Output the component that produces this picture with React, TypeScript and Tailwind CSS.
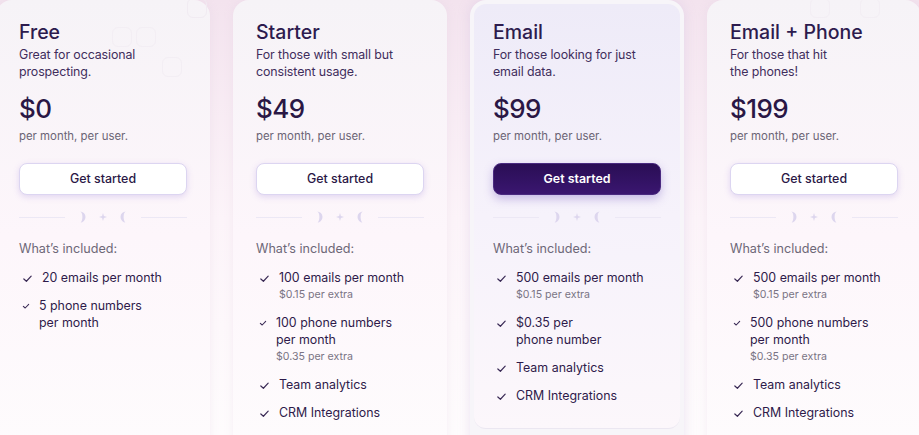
type Feature = { text: string[]; sub?: string; tight?: boolean };

type Plan = {
  name: string;
  desc: string[];
  price: string;
  features: Feature[];
  featured?: boolean;
};

const plans: Plan[] = [
  {
    name: "Free",
    desc: ["Great for occasional", "prospecting."],
    price: "$0",
    features: [
      { text: ["20 emails per month"] },
      { text: ["5 phone numbers", "per month"], tight: true },
    ],
  },
  {
    name: "Starter",
    desc: ["For those with small but", "consistent usage."],
    price: "$49",
    features: [
      { text: ["100 emails per month"], sub: "$0.15 per extra" },
      { text: ["100 phone numbers", "per month"], sub: "$0.35 per extra", tight: true },
      { text: ["Team analytics"] },
      { text: ["CRM Integrations"] },
    ],
  },
  {
    name: "Email",
    desc: ["For those looking for just", "email data."],
    price: "$99",
    featured: true,
    features: [
      { text: ["500 emails per month"], sub: "$0.15 per extra" },
      { text: ["$0.35 per", "phone number"] },
      { text: ["Team analytics"] },
      { text: ["CRM Integrations"] },
    ],
  },
  {
    name: "Email + Phone",
    desc: ["For those that hit", "the phones!"],
    price: "$199",
    features: [
      { text: ["500 emails per month"], sub: "$0.15 per extra" },
      { text: ["500 phone numbers", "per month"], sub: "$0.35 per extra", tight: true },
      { text: ["Team analytics"] },
      { text: ["CRM Integrations"] },
    ],
  },
];

function Check({ small }: { small?: boolean }) {
  return (
    <svg
      viewBox="0 0 12 12"
      className={small ? "w-[8px] h-[8px] mt-[5px] shrink-0" : "w-[11px] h-[11px] mt-[4px] shrink-0"}
      fill="none"
      stroke="#3a2a55"
      strokeWidth={small ? 1.6 : 1.3}
      strokeLinecap="round"
      strokeLinejoin="round"
    >
      <path d="M2 6.5 L4.8 9 L10 3.5" />
    </svg>
  );
}

function Divider() {
  return (
    <div className="flex items-center gap-1 mt-4 h-3">
      <div className="flex-1 h-px bg-[#ece8f5]" />
      <svg viewBox="0 0 68 14" className="w-[68px] h-[14px]" fill="#ddd6ee">
        <path d="M11 1.5 A5.5 5.5 0 0 1 11 12.5 A2.4 5.5 0 0 0 11 1.5 Z" />
        <path d="M34 3 L34.9 6.1 L38 7 L34.9 7.9 L34 11 L33.1 7.9 L30 7 L33.1 6.1 Z" />
        <path d="M57 1.5 A5.5 5.5 0 0 0 57 12.5 A2.4 5.5 0 0 1 57 1.5 Z" />
      </svg>
      <div className="flex-1 h-px bg-[#ece8f5]" />
    </div>
  );
}

function CardBody({ plan }: { plan: Plan }) {
  return (
    <>
      <h2 className="text-[19.5px] leading-[28px] font-medium text-[#2d1b4e]">{plan.name}</h2>
      <p className="text-[12.4px] leading-[17px] text-[#3f2d5c] tracking-[-0.1px]">
        {plan.desc[0]}
        <br />
        {plan.desc[1]}
      </p>
      <div className="mt-[11px] text-[26px] leading-[36px] font-medium tracking-[-0.6px] text-[#2a1745]">
        {plan.price}
      </div>
      <div className="mt-[1px] text-[11.4px] leading-[16px] text-[#6b6475]">per month, per user.</div>
      {plan.featured ? (
        <button className="mt-[19px] w-full h-8 rounded-lg bg-gradient-to-b from-[#2a0e55] to-[#3a1670] border border-[#4a2a80] text-white text-[12.4px] font-semibold shadow-[0_4px_10px_rgba(110,80,190,0.35)]">
          Get started
        </button>
      ) : (
        <button className="mt-[19px] w-full h-8 rounded-lg bg-white border border-[#dcd5f1] text-[#2a1745] text-[12.4px] font-medium shadow-[0_2px_6px_rgba(130,100,210,0.22)]">
          Get started
        </button>
      )}
      <Divider />
      <div className="mt-[17px] text-[12.6px] leading-[18px] text-[#6e6878]">What’s included:</div>
      <ul className="mt-[11px] flex flex-col gap-[11px]">
        {plan.features.map((f, i) => (
          <li key={i} className="flex gap-[9px] pl-[3px]">
            <Check small={f.tight} />
            <div>
              <div className="text-[12.4px] leading-[17px] text-[#2e1a4a]">
                {f.text.map((t, j) => (
                  <div key={j}>{t}</div>
                ))}
              </div>
              {f.sub && <div className="mt-[1px] text-[10.6px] leading-[16px] text-[#7a7484]">{f.sub}</div>}
            </div>
          </li>
        ))}
      </ul>
    </>
  );
}

function Card({ plan }: { plan: Plan }) {
  if (plan.featured) {
    return (
      <div className="w-[214px] shrink-0 h-[470px] rounded-2xl bg-[#f7f5f9] p-1 shadow-[0_0_12px_rgba(200,180,220,0.35)]">
        <div className="h-[425px] rounded-xl bg-gradient-to-b from-[#eeebf8] via-[#f6f2fb] to-[#fcf7fb] border-b border-[#ebe7f1] px-[19px] pt-[14px]">
          <CardBody plan={plan} />
        </div>
      </div>
    );
  }

  return (
    <div className="w-[214px] shrink-0 h-[470px] rounded-2xl bg-gradient-to-b from-[#f6f3f7] via-[#fdf6fb] to-[#fefcfd] shadow-[0_0_8px_rgba(220,200,225,0.25)] px-[23px] pt-[18px]">
      <CardBody plan={plan} />
    </div>
  );
}

export default function App() {
  return (
    <main
      className="relative w-[919px] h-[435px] overflow-hidden bg-gradient-to-b from-[#f3e3ee] via-[#fcf4f9] to-[#fefcfd]"
      style={{ fontFamily: "Inter, 'Noto Sans', sans-serif" }}
    >
      <div className="flex gap-[23px] ml-[-4px]">
        {plans.map((p) => (
          <Card key={p.name} plan={p} />
        ))}
      </div>

      {/* faint grid squares in the background */}
      <div className="absolute left-[112px] top-[27px] flex gap-[4px] pointer-events-none">
        <div className="w-[20px] h-[20px] rounded-[6px] border border-[#f3eef4]" />
        <div className="w-[20px] h-[20px] rounded-[6px] border border-[#f3eef4]" />
      </div>
      <div className="absolute left-[162px] top-[57px] w-[20px] h-[20px] rounded-[6px] border border-[#f3eef4] pointer-events-none" />
      <div className="absolute left-[187px] top-[-2px] w-[20px] h-[20px] rounded-[6px] border border-[#f1ebf2] pointer-events-none" />
      <div className="absolute left-[810px] top-[-2px] w-[20px] h-[20px] rounded-[6px] border border-[#f3eef4] pointer-events-none" />
      <div className="absolute left-[860px] top-[-2px] w-[20px] h-[20px] rounded-[6px] border border-[#f3eef4] pointer-events-none" />

      <div className="absolute right-[-120px] bottom-[-122px] w-[140px] h-[140px] rounded-full bg-gradient-to-br from-[#6d28d9] to-[#a855f7]" />
    </main>
  );
}
